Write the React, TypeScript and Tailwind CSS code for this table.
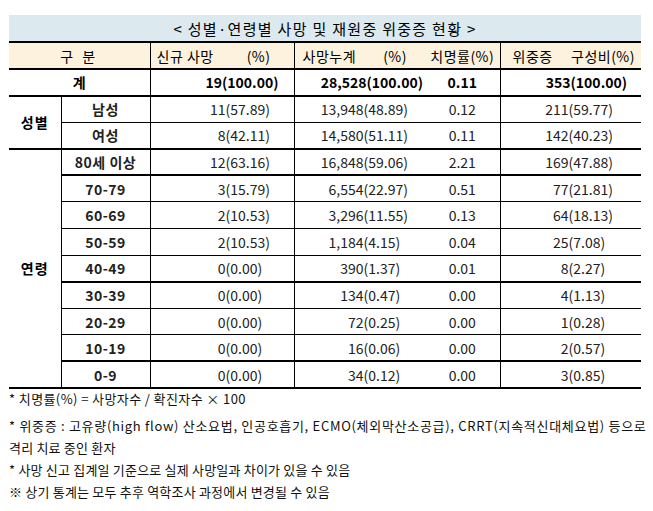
import React from 'react';

type Row = {
  label: string;
  n: string;
  np: string;
  c: string;
  cp: string;
  f: string;
  s: string;
  sp: string;
  thick?: boolean;
};

const genderRows: Row[] = [
  { label: '남성', n: '11', np: '57.89', c: '13,948', cp: '48.89', f: '0.12', s: '211', sp: '59.77' },
  { label: '여성', n: '8', np: '42.11', c: '14,580', cp: '51.11', f: '0.11', s: '142', sp: '40.23', thick: true },
];

const ageRows: Row[] = [
  { label: '80세 이상', n: '12', np: '63.16', c: '16,848', cp: '59.06', f: '2.21', s: '169', sp: '47.88', thick: true },
  { label: '70-79', n: '3', np: '15.79', c: '6,554', cp: '22.97', f: '0.51', s: '77', sp: '21.81' },
  { label: '60-69', n: '2', np: '10.53', c: '3,296', cp: '11.55', f: '0.13', s: '64', sp: '18.13' },
  { label: '50-59', n: '2', np: '10.53', c: '1,184', cp: '4.15', f: '0.04', s: '25', sp: '7.08' },
  { label: '40-49', n: '0', np: '0.00', c: '390', cp: '1.37', f: '0.01', s: '8', sp: '2.27', thick: true },
  { label: '30-39', n: '0', np: '0.00', c: '134', cp: '0.47', f: '0.00', s: '4', sp: '1.13' },
  { label: '20-29', n: '0', np: '0.00', c: '72', cp: '0.25', f: '0.00', s: '1', sp: '0.28' },
  { label: '10-19', n: '0', np: '0.00', c: '16', cp: '0.06', f: '0.00', s: '2', sp: '0.57', thick: true },
  { label: '0-9', n: '0', np: '0.00', c: '34', cp: '0.12', f: '0.00', s: '3', sp: '0.85', thick: true },
];

// count right-aligned up to the "(", percentage follows
const Split = ({ w, a, b }: { w: string; a: string; b: string }) => (
  <div className="flex">
    <span className={`${w} text-right`}>{a}</span>
    <span>({b})</span>
  </div>
);

const DataCells = ({ r }: { r: Row }) => {
  const line = r.thick ? 'border-b-2' : 'border-b';
  return (
    <>
      <td className={`${line} border-r border-black font-bold text-center tracking-[0.5px]`}>{r.label}</td>
      <td className={`${line} border-r border-black`}>
        <Split w="w-[75px]" a={r.n} b={r.np} />
      </td>
      <td className={`${line} border-black`}>
        <Split w="w-[69px]" a={r.c} b={r.cp} />
      </td>
      <td className={`${line} border-r border-black text-center`}>{r.f}</td>
      <td className={`${line} border-black`}>
        <Split w="w-[68px]" a={r.s} b={r.sp} />
      </td>
    </>
  );
};

const App: React.FC = () => {
  return (
    <div className="min-h-[511px] bg-white pt-[15px] pl-[9px] font-['Noto_Sans_CJK_KR','Noto_Sans',sans-serif] text-black">
      <table className="w-[632px] table-fixed border-collapse text-[14px] leading-none">
        <colgroup>
          <col className="w-[52px]" />
          <col className="w-[89px]" />
          <col className="w-[144px]" />
          <col className="w-[131px]" />
          <col className="w-[75px]" />
          <col className="w-[141px]" />
        </colgroup>
        <tbody>
          <tr className="h-[27px]">
            <td colSpan={6} className="bg-[#dce9ef] border-b-2 border-black text-center text-[15px] tracking-[1.3px]">
              &lt; 성별·연령별 사망 및 재원중 위중증 현황 &gt;
            </td>
          </tr>
          <tr className="h-[27px] bg-[#fdf2de] font-normal">
            <td colSpan={2} className="border-b-2 border-r border-black text-center tracking-[3px]">구 분</td>
            <td className="border-b-2 border-r border-black">
              <div className="flex justify-between pl-[6px] pr-[23px] tracking-[0.5px]">
                <span>신규 사망</span>
                <span>(%)</span>
              </div>
            </td>
            <td className="border-b-2 border-black">
              <div className="flex justify-between pl-[8px] pr-[18px] tracking-[0.5px]">
                <span>사망누계</span>
                <span>(%)</span>
              </div>
            </td>
            <td className="border-b-2 border-r border-black text-center tracking-[0.5px]">치명률(%)</td>
            <td className="border-b-2 border-black">
              <div className="flex justify-between pl-[12px] pr-[6px] tracking-[0.5px]">
                <span>위중증</span>
                <span>구성비(%)</span>
              </div>
            </td>
          </tr>
          <tr className="h-[26.5px] font-bold">
            <td colSpan={2} className="border-b-2 border-r border-black text-center">계</td>
            <td className="border-b-2 border-r border-black text-right pr-[15px]">19(100.00)</td>
            <td className="border-b-2 border-black text-right pr-[2px]">28,528(100.00)</td>
            <td className="border-b-2 border-r border-black text-center">0.11</td>
            <td className="border-b-2 border-black text-right pr-[14px]">353(100.00)</td>
          </tr>
          {genderRows.map((r, i) => (
            <tr key={r.label} className="h-[26.6px] text-[#222]">
              {i === 0 && (
                <td rowSpan={2} className="border-b-2 border-r border-black text-center font-bold text-black tracking-[1px]">
                  성별
                </td>
              )}
              <DataCells r={r} />
            </tr>
          ))}
          {ageRows.map((r, i) => (
            <tr key={r.label} className="h-[26.6px] text-[#222]">
              {i === 0 && (
                <td rowSpan={9} className="border-b-2 border-r border-black text-center font-bold text-black tracking-[1px]">
                  연령
                </td>
              )}
              <DataCells r={r} />
            </tr>
          ))}
        </tbody>
      </table>

      <div className="-mt-[1px] text-[13px] tracking-[0.2px] text-[#111] leading-[22px] whitespace-nowrap">
        <p className="tracking-[0.4px]">* 치명률(%) = 사망자수 / 확진자수 × 100</p>
        <p className="mt-[5px] tracking-[0.7px]">
          * 위중증 : 고유량(high flow) 산소요법, 인공호흡기, ECMO(체외막산소공급), CRRT(지속적신대체요법) 등으로
        </p>
        <p>격리 치료 중인 환자</p>
        <p>* 사망 신고 집계일 기준으로 실제 사망일과 차이가 있을 수 있음</p>
        <p>※ 상기 통계는 모두 추후 역학조사 과정에서 변경될 수 있음</p>
      </div>
    </div>
  );
};

export default App;
